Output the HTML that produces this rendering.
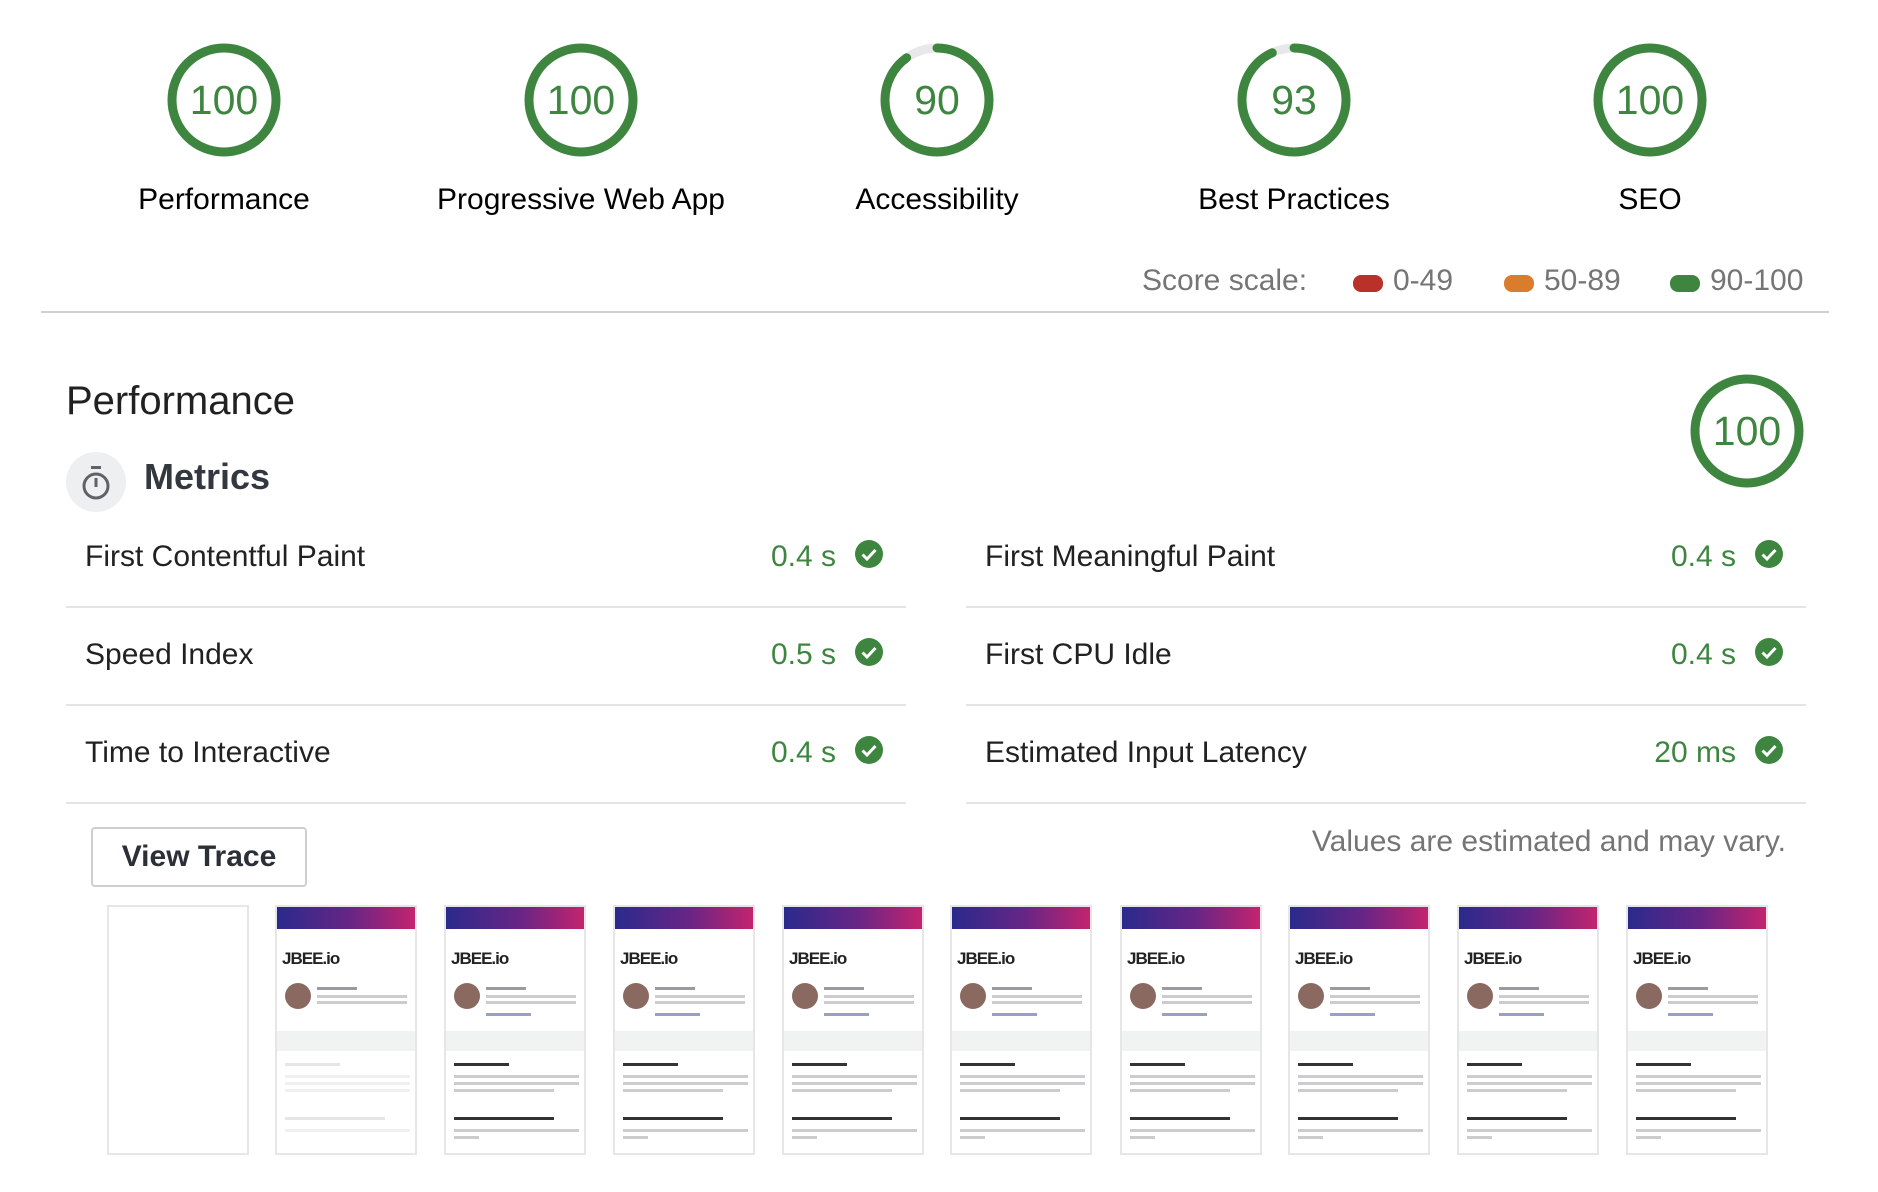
<!DOCTYPE html>
<html><head><meta charset="utf-8"><style>
*{margin:0;padding:0;box-sizing:border-box}
body{width:1878px;height:1192px;background:#fff;font-family:"Liberation Sans",Arial,sans-serif;position:relative;overflow:hidden;color:#212121}
.abs{position:absolute}
.g{position:absolute;width:116px;height:116px}
.g span{position:absolute;left:0;top:0;width:116px;height:116px;line-height:116px;text-align:center;font-size:41px;color:#3e8640}
.lbl{position:absolute;top:183px;width:400px;text-align:center;font-size:30px;color:#000}
.row{position:absolute;height:98px;border-bottom:2px solid #e4e4e4}
.row .t{position:absolute;left:19px;top:30px;font-size:30px;color:#212121}
.row .v{position:absolute;right:70px;top:30px;font-size:30px;color:#3e8640}
.row svg{position:absolute;right:22px;top:29px}
.fr{position:absolute;top:905px;width:142px;height:250px;border:2px solid #e6e6e6;background:#fff;overflow:hidden}
.hd{height:22px;background:linear-gradient(90deg,#2a2a8c,#6a2585 55%,#c3246e)}
.ln{position:absolute;height:3px;background:#9a9aa0}
.jb{position:absolute;left:5px;top:42px;font-size:17px;font-weight:bold;color:#222;letter-spacing:-1px}
</style></head><body>

<div class="g" style="left:166px;top:42px"><svg width="116" height="116"><circle cx="58" cy="58" r="52" fill="none" stroke="#3e8640" stroke-width="9"/></svg><span>100</span></div>
<div class="g" style="left:523px;top:42px"><svg width="116" height="116"><circle cx="58" cy="58" r="52" fill="none" stroke="#3e8640" stroke-width="9"/></svg><span>100</span></div>
<div class="g" style="left:879px;top:42px"><svg width="116" height="116"><circle cx="58" cy="58" r="52" fill="none" stroke="#e8e8ea" stroke-width="9"/><circle cx="58" cy="58" r="52" fill="none" stroke="#3e8640" stroke-width="9" stroke-linecap="round" stroke-dasharray="294 400" transform="rotate(-90 58 58)"/></svg><span>90</span></div>
<div class="g" style="left:1236px;top:42px"><svg width="116" height="116"><circle cx="58" cy="58" r="52" fill="none" stroke="#e8e8ea" stroke-width="9"/><circle cx="58" cy="58" r="52" fill="none" stroke="#3e8640" stroke-width="9" stroke-linecap="round" stroke-dasharray="304 400" transform="rotate(-90 58 58)"/></svg><span>93</span></div>
<div class="g" style="left:1592px;top:42px"><svg width="116" height="116"><circle cx="58" cy="58" r="52" fill="none" stroke="#3e8640" stroke-width="9"/></svg><span>100</span></div>

<div class="lbl" style="left:24px">Performance</div>
<div class="lbl" style="left:381px">Progressive Web App</div>
<div class="lbl" style="left:737px">Accessibility</div>
<div class="lbl" style="left:1094px">Best Practices</div>
<div class="lbl" style="left:1450px">SEO</div>

<div class="abs" style="left:1142px;top:264px;font-size:30px;color:#757575">Score scale:</div>
<div class="abs" style="left:1353px;top:275px;width:30px;height:17px;border-radius:8px;background:#b93128"></div>
<div class="abs" style="left:1393px;top:264px;font-size:30px;color:#757575">0-49</div>
<div class="abs" style="left:1504px;top:275px;width:30px;height:17px;border-radius:8px;background:#d97c2b"></div>
<div class="abs" style="left:1544px;top:264px;font-size:30px;color:#757575">50-89</div>
<div class="abs" style="left:1670px;top:275px;width:30px;height:17px;border-radius:8px;background:#3e8640"></div>
<div class="abs" style="left:1710px;top:264px;font-size:30px;color:#757575">90-100</div>

<div class="abs" style="left:41px;top:311px;width:1788px;height:2px;background:#d0d0d0"></div>

<div class="abs" style="left:66px;top:379px;font-size:40px;color:#212121">Performance</div>
<div class="g" style="left:1689px;top:373px"><svg width="116" height="116"><circle cx="58" cy="58" r="52" fill="none" stroke="#3e8640" stroke-width="9"/></svg><span>100</span></div>

<div class="abs" style="left:66px;top:452px;width:60px;height:60px;border-radius:50%;background:#eeeff1"></div>
<svg class="abs" style="left:78px;top:462px" width="36" height="40" viewBox="0 0 36 40"><rect x="13" y="4" width="10" height="3" fill="#5f6368"/><circle cx="18" cy="24" r="12" fill="none" stroke="#5f6368" stroke-width="3"/><rect x="16.5" y="16" width="3" height="9" fill="#5f6368"/></svg>
<div class="abs" style="left:144px;top:456px;font-size:36px;font-weight:bold;color:#333740">Metrics</div>

<div class="row" style="left:66px;top:510px;width:840px"><div class="t">First Contentful Paint</div><div class="v">0.4 s</div><svg width="30" height="30"><circle cx="15" cy="15" r="14" fill="#3e8640"/><path d="M8.5 15.5l4.5 4.5 8.5-9" stroke="#fff" stroke-width="3" fill="none"/></svg></div>
<div class="row" style="left:66px;top:608px;width:840px"><div class="t">Speed Index</div><div class="v">0.5 s</div><svg width="30" height="30"><circle cx="15" cy="15" r="14" fill="#3e8640"/><path d="M8.5 15.5l4.5 4.5 8.5-9" stroke="#fff" stroke-width="3" fill="none"/></svg></div>
<div class="row" style="left:66px;top:706px;width:840px"><div class="t">Time to Interactive</div><div class="v">0.4 s</div><svg width="30" height="30"><circle cx="15" cy="15" r="14" fill="#3e8640"/><path d="M8.5 15.5l4.5 4.5 8.5-9" stroke="#fff" stroke-width="3" fill="none"/></svg></div>
<div class="row" style="left:966px;top:510px;width:840px"><div class="t">First Meaningful Paint</div><div class="v">0.4 s</div><svg width="30" height="30"><circle cx="15" cy="15" r="14" fill="#3e8640"/><path d="M8.5 15.5l4.5 4.5 8.5-9" stroke="#fff" stroke-width="3" fill="none"/></svg></div>
<div class="row" style="left:966px;top:608px;width:840px"><div class="t">First CPU Idle</div><div class="v">0.4 s</div><svg width="30" height="30"><circle cx="15" cy="15" r="14" fill="#3e8640"/><path d="M8.5 15.5l4.5 4.5 8.5-9" stroke="#fff" stroke-width="3" fill="none"/></svg></div>
<div class="row" style="left:966px;top:706px;width:840px"><div class="t">Estimated Input Latency</div><div class="v">20 ms</div><svg width="30" height="30"><circle cx="15" cy="15" r="14" fill="#3e8640"/><path d="M8.5 15.5l4.5 4.5 8.5-9" stroke="#fff" stroke-width="3" fill="none"/></svg></div>

<div class="abs" style="left:91px;top:827px;width:216px;height:60px;border:2px solid #cfcfcf;border-radius:4px;text-align:center;line-height:56px;font-size:30px;font-weight:bold;color:#2b2f36">View Trace</div>
<div class="abs" style="right:92px;top:825px;font-size:30px;color:#757575">Values are estimated and may vary.</div>

<div class="fr" style="left:107px"></div>
<div id="fs"></div>
<div class="fr" style="left:275px"><div class="hd"></div><div class="jb">JBEE.io</div><div style="position:absolute;left:8px;top:76px;width:26px;height:26px;border-radius:50%;background:#8a6a60"></div><div class="ln" style="left:40px;top:80px;width:40px"></div><div class="ln" style="left:40px;top:88px;width:90px;opacity:.5"></div><div class="ln" style="left:40px;top:94px;width:90px;opacity:.5"></div><div style="position:absolute;left:0;top:124px;width:140px;height:20px;background:#f1f3f3"></div><div class="ln" style="left:8px;top:156px;width:55px;opacity:.25"></div><div class="ln" style="left:8px;top:168px;width:125px;opacity:.15"></div><div class="ln" style="left:8px;top:175px;width:125px;opacity:.15"></div><div class="ln" style="left:8px;top:182px;width:125px;opacity:.15"></div><div class="ln" style="left:8px;top:210px;width:100px;opacity:.25"></div><div class="ln" style="left:8px;top:222px;width:125px;opacity:.15"></div></div>
<script>
var xs=[444,613,782,950,1120,1288,1457,1626],h='';
xs.forEach(function(x){h+='<div class="fr" style="left:'+x+'px"><div class="hd"></div><div class="jb">JBEE.io</div><div style="position:absolute;left:8px;top:76px;width:26px;height:26px;border-radius:50%;background:#8a6a60"></div><div class="ln" style="left:40px;top:80px;width:40px"></div><div class="ln" style="left:40px;top:88px;width:90px;opacity:.5"></div><div class="ln" style="left:40px;top:94px;width:90px;opacity:.5"></div><div class="ln" style="left:40px;top:106px;width:45px;background:#5560a0;opacity:.6"></div><div style="position:absolute;left:0;top:124px;width:140px;height:20px;background:#f1f3f3"></div><div class="ln" style="left:8px;top:156px;width:55px;background:#333"></div><div class="ln" style="left:8px;top:168px;width:125px;opacity:.5"></div><div class="ln" style="left:8px;top:175px;width:125px;opacity:.5"></div><div class="ln" style="left:8px;top:182px;width:100px;opacity:.5"></div><div class="ln" style="left:8px;top:210px;width:100px;background:#333"></div><div class="ln" style="left:8px;top:222px;width:125px;opacity:.5"></div><div class="ln" style="left:8px;top:229px;width:25px;opacity:.5"></div></div>';});
document.getElementById('fs').innerHTML=h;
</script>
</body></html>
